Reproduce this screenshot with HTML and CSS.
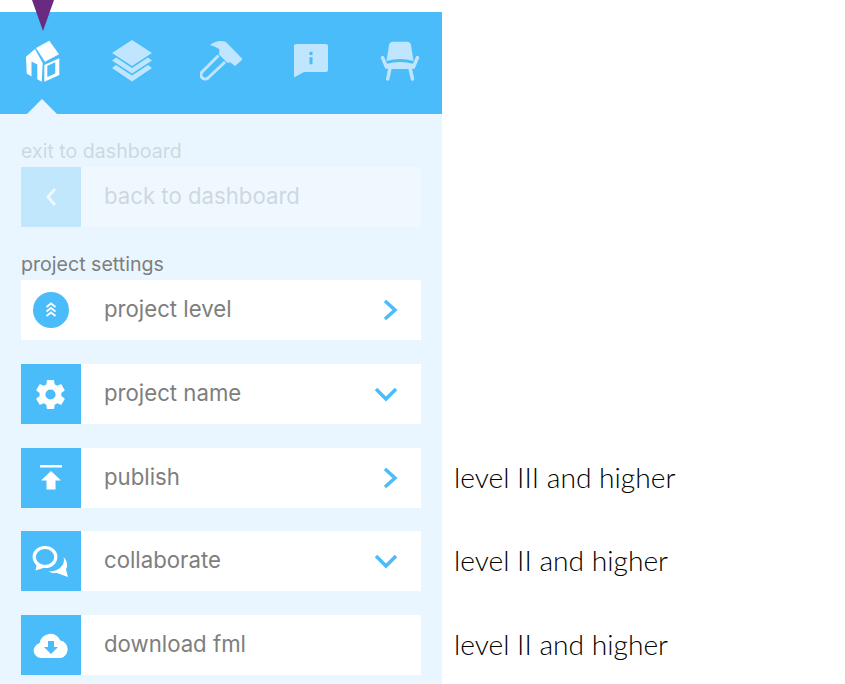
FILE: index.html
```html
<!DOCTYPE html>
<html lang="en">

<head>
    <meta charset="UTF-8">
    <title>Project settings</title>
    <link rel="stylesheet" href="styles.css">
</head>

<body>

    <aside class="panel">
        <nav class="tabs">
            <svg class="tab" width="42" height="42" viewBox="0 0 42 42" fill="#fff">
                <polygon points="15,8 28.3,0.7 38,14.3 24,21.7" />
                <path d="M5 16.700 14 9 21.700 23 20.700 41.700 16.300 39.300V24.500L10.500 21.500V36.500L5.700 33.500Z" />
                <path fill-rule="evenodd" d="M23.300 25 38.300 18.300V35L23.300 41.700ZM26.300 25.700V37L34.300 33.600V22.300Z" />
            </svg>
            <svg class="tab tab-off" width="42" height="42" viewBox="0 0 42 42" fill="#bfe6fe">
                <polygon points="21,0 41,13 21,26 1,13" />
                <path d="M5 17.500 21 28 37 17.500 41 20.500 21 33.500 1 20.500Z" />
                <path d="M5 25 21 35.500 37 25 41 28 21 41.500 1 28Z" />
            </svg>
            <svg class="tab tab-off" width="42" height="42" viewBox="0 0 42 42" fill="#bfe6fe">
                <path d="M10 5C15 1 21 0 26 2L42.700 19.300 35 26 30 22.300 27.500 23 19 14.500 19.500 9.500C17 7 13 6 10 5Z" />
                <path d="M18.500 15.500 2.500 31.500A4 4 0 0 0 8 38L25 22" fill="none" stroke="#bfe6fe" stroke-width="3" />
            </svg>
            <svg class="tab tab-off" width="42" height="42" viewBox="0 0 42 42" fill="#bfe6fe">
                <path fill-rule="evenodd" d="M6 4H36Q38 4 38 6V30Q38 32 36 32H14L4 37.500V6Q4 4 6 4ZM19.500 11.700V15H22.500V11.700ZM19.500 17.300V24.300H22.500V17.300Z" />
            </svg>
            <svg class="tab tab-off" width="42" height="42" viewBox="0 0 42 42" fill="#bfe6fe">
                <path d="M14 1.700H28Q31 1.700 32 5L34.500 21Q21 17 7.500 21L10 5Q11 1.700 14 1.700Z" />
                <path d="M3.500 17.500 7.500 27H34.500L38.500 17.500" fill="none" stroke="#bfe6fe" stroke-width="3.500" stroke-linecap="round" />
                <path d="M7 24Q21 20 35 24L33 29H9Z" />
                <path d="M11 28 8.700 39M31 28 33.500 39" fill="none" stroke="#bfe6fe" stroke-width="3.500" stroke-linecap="round" />
            </svg>
            <span class="notch"></span>
        </nav>

        <div class="section section-faded">
            <h3 class="section-title">exit to dashboard</h3>
            <div class="row">
                <div class="row-icon">
                    <svg width="14" height="22" viewBox="0 0 14 22" fill="none" stroke="#fff" stroke-width="3">
                        <path d="M11 3 4 11 11 19" />
                    </svg>
                </div>
                <span class="row-label">back to dashboard</span>
            </div>
        </div>

        <div class="section section-settings">
            <h3 class="section-title">project settings</h3>

            <div class="row">
                <div class="row-icon row-icon-plain">
                    <span class="circle">
                        <svg width="14" height="18" viewBox="0 0 14 18" fill="none" stroke="#fff" stroke-width="1.800">
                            <path d="M2.500 6 7 2.500 11.500 6M2.500 10.500 7 7 11.500 10.500M2.500 15 7 11.500 11.500 15" />
                        </svg>
                    </span>
                </div>
                <span class="row-label">project level</span>
                <svg class="chevron" width="16" height="22" viewBox="0 0 16 22">
                    <path d="M3 2 13 11 3 20" />
                </svg>
            </div>

            <div class="row">
                <div class="row-icon">
                    <svg width="35" height="35" viewBox="0 0 24 24" fill="#fff">
                        <path d="M19.400 13c.04-.33.06-.66.06-1s-.02-.67-.06-1l2.100-1.650c.2-.15.25-.42.120-.64l-2-3.460c-.12-.22-.39-.3-.61-.22l-2.490 1c-.52-.4-1.080-.73-1.690-.98l-.38-2.650A.49.49 0 0 0 14 2h-4c-.25 0-.46.18-.49.42l-.38 2.650c-.61.25-1.170.59-1.690.98l-2.490-1c-.23-.09-.49 0-.61.22l-2 3.460c-.13.22-.07.49.12.64L4.570 11c-.04.33-.07.67-.07 1s.03.67.07 1l-2.110 1.650c-.19.15-.24.42-.12.64l2 3.460c.12.22.39.3.61.22l2.490-1c.52.4 1.080.73 1.690.98l.38 2.650c.03.24.24.42.49.42h4c.25 0 .46-.18.49-.42l.38-2.650c.61-.25 1.170-.59 1.690-.98l2.490 1c.23.09.49 0 .61-.22l2-3.460c.12-.22.07-.49-.12-.64zM12 15.500a3.500 3.500 0 1 1 0-7 3.500 3.500 0 0 1 0 7z" />
                    </svg>
                </div>
                <span class="row-label">project name</span>
                <svg class="chevron" width="24" height="16" viewBox="0 0 24 16">
                    <path d="M2 3 12 13 22 3" />
                </svg>
            </div>

            <div class="row">
                <div class="row-icon">
                    <svg width="22" height="25" viewBox="0 0 22 25" fill="#fff">
                        <rect x="0" y="0" width="22" height="2.500" />
                        <polygon points="11,6 21,15.500 15.500,15.500 15.500,24.500 6.500,24.500 6.500,15.500 1,15.500" />
                    </svg>
                </div>
                <span class="row-label">publish</span>
                <svg class="chevron" width="16" height="22" viewBox="0 0 16 22">
                    <path d="M3 2 13 11 3 20" />
                </svg>
            </div>

            <div class="row">
                <div class="row-icon">
                    <svg width="38" height="33" viewBox="0 0 38 33">
                        <path d="M31.500 12C34.500 15 36.500 20 34 24.500L36 32 25 28C21 28.500 18 27.500 16 26.500 25 27 34 21 31.500 12Z" fill="#fff" />
                        <ellipse cx="13" cy="12" rx="10.800" ry="9.500" fill="none" stroke="#fff" stroke-width="3.200" />
                        <path d="M5 18 3.500 25.500 13 22.500Z" fill="#fff" />
                    </svg>
                </div>
                <span class="row-label">collaborate</span>
                <svg class="chevron" width="24" height="16" viewBox="0 0 24 16">
                    <path d="M2 3 12 13 22 3" />
                </svg>
            </div>

            <div class="row">
                <div class="row-icon">
                    <svg width="36" height="26" viewBox="0 0 36 26">
                        <path d="M8 26A7.500 7.500 0 0 1 6.500 11.200 11 11 0 0 1 27.500 8.500 9 9 0 0 1 28 26Z" fill="#fff" />
                        <polygon points="15,9 21,9 21,15 25,15 18,22 11,15 15,15" fill="#4abcfa" />
                    </svg>
                </div>
                <span class="row-label">download fml</span>
            </div>
        </div>
    </aside>

    <div class="notes">
        <p class="note">level III and higher</p>
        <p class="note">level II and higher</p>
        <p class="note">level II and higher</p>
    </div>

    <svg class="marker" width="22" height="31" viewBox="0 0 22 31">
        <polygon points="0,0 22,0 11,31" fill="#6a2a80" />
    </svg>

</body>

</html>
```

FILE: styles.css
```css
html,
body {
    height: 100%;
    margin: 0;
    overflow: hidden;
    background: #fff;
    font-family: "Inter", Arial, sans-serif;
}

body {
    display: flex;
    padding-top: 12px;
    box-sizing: border-box;
}

.marker {
    position: absolute;
    top: 0;
    left: 32px;
}

.panel {
    width: 442px;
    flex-shrink: 0;
    background: #eaf6ff;
}

.tabs {
    position: relative;
    display: flex;
    justify-content: space-between;
    align-items: flex-start;
    height: 102px;
    padding: 28px 21px 0;
    box-sizing: border-box;
    background: #4abcfa;
}

.tab {
    display: block;
}

.notch {
    position: absolute;
    left: 27px;
    bottom: 0;
    width: 30px;
    height: 15px;
    background: #eaf6ff;
    clip-path: polygon(50% 0, 100% 100%, 0 100%);
}

.section {
    padding: 0 21px;
}

.section-faded {
    opacity: 0.25;
    margin-top: 24px;
}

.section-settings {
    margin-top: 24.400px;
}

.section-title {
    margin: 0;
    height: 29px;
    font-size: 19.600px;
    line-height: 26px;
    font-weight: 400;
    color: #7e7e7e;
}

.row {
    display: flex;
    align-items: center;
    height: 60px;
    margin-bottom: 23.700px;
    background: #fff;
}

.row-icon {
    display: flex;
    justify-content: center;
    align-items: center;
    width: 60px;
    height: 60px;
    padding-right: 1px;
    box-sizing: border-box;
    background: #4abcfa;
}

.row-icon-plain {
    background: #fff;
}

.circle {
    display: flex;
    justify-content: center;
    align-items: center;
    width: 36px;
    height: 36px;
    border-radius: 50%;
    background: #4abcfa;
}

.row-label {
    flex: 1;
    margin-left: 23px;
    font-size: 22.200px;
    line-height: 26px;
    padding-bottom: 2px;
    color: #7e7e7e;
}

.chevron {
    margin-right: 23px;
    fill: none;
    stroke: #4abcfa;
    stroke-width: 3.500px;
}

.notes {
    padding: 435.600px 0 0 12px;
    font-family: "Lato", Arial, sans-serif;
}

.note {
    margin: 0;
    height: 83.700px;
    line-height: 58px;
    font-size: 28.200px;
    font-weight: 300;
    color: #000;
}
```
